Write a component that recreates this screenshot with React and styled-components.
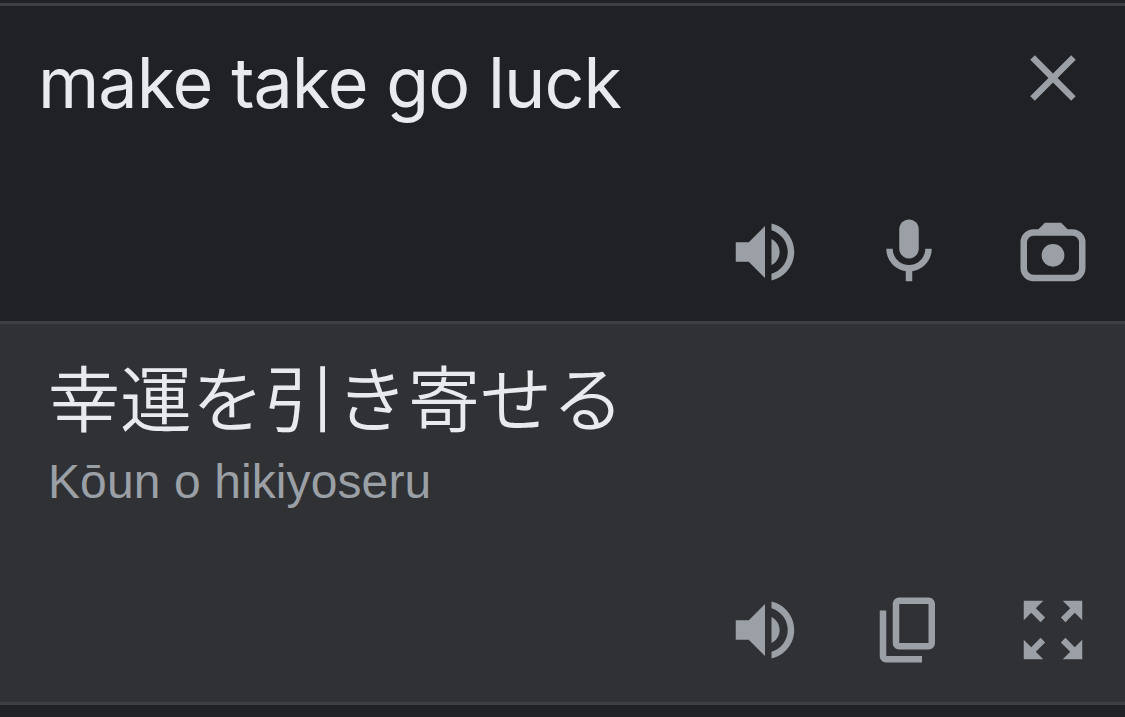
import React from "react";
import styled, { createGlobalStyle } from "styled-components";

const VolumeIcon = () => (
  <Icon viewBox="0 0 24 24">
    <path d="M3 9v6h4l5 5V4L7 9H3zm13.5 3c0-1.77-1.02-3.29-2.5-4.03v8.05c1.48-.73 2.5-2.25 2.5-4.02zM14 3.23v2.06c2.89.86 5 3.54 5 6.71s-2.11 5.85-5 6.71v2.06c4.01-.91 7-4.49 7-8.77s-2.99-7.86-7-8.77z" />
  </Icon>
);

const MicIcon = () => (
  <Icon viewBox="0 0 24 24">
    <path d="M12 14c1.66 0 3-1.34 3-3V5c0-1.66-1.34-3-3-3S9 3.34 9 5v6c0 1.66 1.34 3 3 3z" />
    <path d="M17 11c0 2.76-2.24 5-5 5s-5-2.24-5-5H5c0 3.53 2.61 6.43 6 6.92V21h2v-3.08c3.39-.49 6-3.39 6-6.92h-2z" />
  </Icon>
);

const CameraIcon = () => (
  <Icon viewBox="0 0 24 24">
    <path
      fillRule="evenodd"
      d="M9.5 3h5l2 2H18a4 4 0 0 1 4 4v8a4 4 0 0 1-4 4H6a4 4 0 0 1-4-4V9a4 4 0 0 1 4-4h1.5zM6 7a2 2 0 0 0-2 2v8a2 2 0 0 0 2 2h12a2 2 0 0 0 2-2V9a2 2 0 0 0-2-2z"
    />
    <circle cx="12" cy="13" r="3.5" />
  </Icon>
);

const CopyIcon = () => (
  <Icon viewBox="0 0 24 24">
    <path d="M18 2H9c-1.1 0-2 .9-2 2v12c0 1.1.9 2 2 2h9c1.1 0 2-.9 2-2V4c0-1.1-.9-2-2-2zm0 14H9V4h9v12z" />
    <path d="M3 6v14c0 1.1.9 2 2 2h11v-2H5V6z" />
  </Icon>
);

const ExpandIcon = () => (
  <Icon viewBox="0 0 24 24">
    <path d="M15 3l2.3 2.3-2.89 2.87 1.42 1.42L18.7 6.7 21 9V3zM3 9l2.3-2.3 2.87 2.89 1.42-1.42L6.7 5.3 9 3H3zm6 12l-2.3-2.3 2.89-2.87-1.42-1.42L5.3 17.3 3 15v6zm12-6l-2.3 2.3-2.87-2.89-1.42 1.42 2.89 2.87L15 21h6z" />
  </Icon>
);

const CloseIcon = () => (
  <Icon viewBox="0 0 24 24">
    <path d="M19 6.41L17.59 5 12 10.59 6.41 5 5 6.41 10.59 12 5 17.59 6.41 19 12 13.41 17.59 19 19 17.59 13.41 12z" />
  </Icon>
);

const App = () => {
  return (
    <>
      <GlobalStyle />
      <Translator>
        <SourcePanel>
          <SourceHeader>
            <SourceText>make take go luck</SourceText>
            <IconButton aria-label="Clear">
              <CloseIcon />
            </IconButton>
          </SourceHeader>
          <Actions>
            <IconButton aria-label="Listen">
              <VolumeIcon />
            </IconButton>
            <IconButton aria-label="Speak">
              <MicIcon />
            </IconButton>
            <IconButton aria-label="Camera">
              <CameraIcon />
            </IconButton>
          </Actions>
        </SourcePanel>
        <ResultPanel>
          <div>
            <ResultText lang="ja">幸運を引き寄せる</ResultText>
            <Romanization>Kōun o hikiyoseru</Romanization>
          </div>
          <Actions>
            <IconButton aria-label="Listen">
              <VolumeIcon />
            </IconButton>
            <IconButton aria-label="Copy">
              <CopyIcon />
            </IconButton>
            <IconButton aria-label="Full screen">
              <ExpandIcon />
            </IconButton>
          </Actions>
        </ResultPanel>
      </Translator>
    </>
  );
};

export default App;

const GlobalStyle = createGlobalStyle`
  * {
    box-sizing: border-box;
  }

  body {
    margin: 0;
    background: #202124;
  }
`;

const Translator = styled.main`
  height: 717px;
  padding-top: 3px;
  overflow: hidden;
  background: #202124;
`;

const Panel = styled.section`
  display: flex;
  flex-direction: column;
  justify-content: space-between;
  border-top: 3px solid #3c4043;
`;

const SourcePanel = styled(Panel)`
  height: 318px;
  padding: 33px 33px 30px 38px;
`;

const ResultPanel = styled(Panel)`
  height: 384px;
  padding: 29px 33px 33px 48px;
  background: #303134;
  border-bottom: 3px solid #3c4043;
`;

const SourceHeader = styled.div`
  display: flex;
  justify-content: space-between;
  align-items: flex-start;
`;

const SourceText = styled.p`
  margin: 2px 0 0;
  font-family: Inter, sans-serif;
  font-size: 70px;
  line-height: 84px;
  letter-spacing: -0.95px;
  color: #e8eaed;
  white-space: nowrap;
`;

const ResultText = styled.p`
  margin: 0;
  font-family: "Liberation Sans", "Noto Sans CJK JP", sans-serif;
  font-size: 72px;
  font-weight: 350;
  line-height: 96px;
  color: #e8eaed;
  white-space: nowrap;
`;

const Romanization = styled.p`
  margin: 5px 0 0;
  font-family: "Liberation Sans", Arial, sans-serif;
  font-size: 48px;
  line-height: 56px;
  letter-spacing: 0.1px;
  color: #9aa0a6;
  white-space: nowrap;
`;

const Actions = styled.div`
  display: flex;
  justify-content: flex-end;
  gap: 66px;
`;

const IconButton = styled.button`
  width: 78px;
  height: 78px;
  padding: 0;
  border: none;
  background: none;
  color: #9aa0a6;
  cursor: pointer;
`;

const Icon = styled.svg`
  display: block;
  width: 78px;
  height: 78px;
  fill: currentColor;
`;
